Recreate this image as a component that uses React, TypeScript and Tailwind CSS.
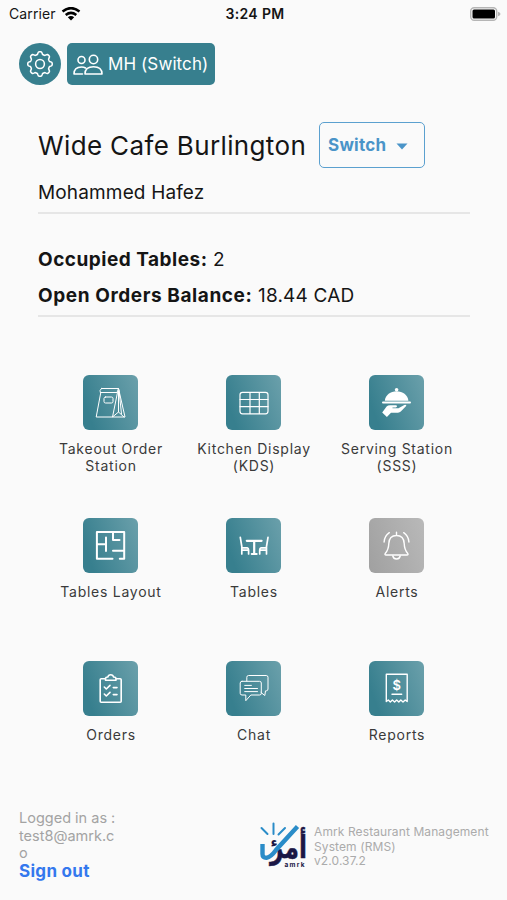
import type { ReactNode } from "react";

const tiles: { title: string; off?: boolean; icon: ReactNode }[] = [
  {
    title: "Takeout Order Station",
    icon: (
      <g strokeWidth="1">
        <path d="M18.5 13.5H35.5L34 17.5H17.3q-1.2-2 1.2-4Z" />
        <path d="M17.8 17.5L13.2 42H29.5L34.5 17.5M35.5 13.5L42 42H29.5L35.5 37L41 42M35.5 16V37M36 15L38.5 39" />
        <rect x="21" y="22" width="9" height="6" rx="1.5" />
      </g>
    ),
  },
  {
    title: "Kitchen Display (KDS)",
    icon: (
      <g strokeWidth="1.2">
        <rect x="14" y="17.3" width="28" height="21.5" rx="2.5" />
        <path d="M24 17.5V38.5M33.3 17.5V38.5M14 24.5H42M14 31.7H42" />
      </g>
    ),
  },
  {
    title: "Serving Station (SSS)",
    icon: (
      <g fill="white" stroke="none">
        <circle cx="27.6" cy="14.8" r="1.8" />
        <path d="M15.8 25.7C16.5 20 21.5 16.3 27.6 16.3S38.7 20 39.4 25.7Z" />
        <rect x="13" y="26.6" width="29" height="2" rx="1" />
        <path d="M13.2 37.4L17.6 31.6Q18.8 30.2 21 30.2H26.8Q28 30.2 28 31.3T26.8 32.5H23.5V33.3H29.5L35.3 30Q37 29.5 37.4 30.8L31.8 36.6Q30.7 37.7 29 37.7H22L17.9 42Z" />
      </g>
    ),
  },
  {
    title: "Tables Layout",
    icon: (
      <path
        strokeWidth="2"
        d="M29.5 40.7H13.9V13.9H41.2V40.7H36.8M30 14V22H36.5M23 19.5V33M14 26.3H23M30 32.7H41"
      />
    ),
  },
  {
    title: "Tables",
    icon: (
      <g strokeWidth="1.7">
        <path d="M14.3 19.3L15.8 28.5V36M15.8 29.8H21.3Q22.6 30 22.6 32V36M16 32.2H22" />
        <path d="M42 19.3L40.5 28.5V36M40.5 29.8H35Q33.7 30 33.7 32V36M40.3 32.2H34.3" />
        <path strokeWidth="2.2" d="M20.8 22.8H35.6M28.2 23V36M25.8 36H30.6" />
      </g>
    ),
  },
  {
    title: "Alerts",
    off: true,
    icon: (
      <g strokeWidth="1.4">
        <path d="M27.5 14.2V17.5M27.5 17.5C22 17.5 20 21.5 19.8 25.5C19.6 31 18.5 33 16.2 35.5Q15.5 37 17 37H38Q39.5 37 38.8 35.5C36.5 33 35.4 31 35.2 25.5C35 21.5 33 17.5 27.5 17.5Z" />
        <path d="M23.8 38Q24.5 41 27.5 41T31.2 38M20.3 14.7Q15.5 18 15.1 24M34.7 14.7Q39.5 18 39.9 24" />
      </g>
    ),
  },
  {
    title: "Orders",
    icon: (
      <g strokeWidth="1.6">
        <path d="M22.5 17.7H18.2Q17.2 17.7 17.2 18.7V40.2Q17.2 41.2 18.2 41.2H37.2Q38.2 41.2 38.2 40.2V18.7Q38.2 17.7 37.2 17.7H33" />
        <path d="M22.5 19.2V17.2Q22.7 16.1 24.8 16Q25.3 13.7 27.7 13.7T30.6 16Q32.8 16.1 33 17.2V19.2Z" />
        <path d="M21.3 26L23.3 28L27 24.4M30.3 26.6H34M21.3 33L23.3 35L27 31.4M30.3 33.6H34" />
      </g>
    ),
  },
  {
    title: "Chat",
    icon: (
      <g strokeWidth="1">
        <path d="M20.8 20V16.3Q20.8 14.5 22.6 14.5H40.2Q42 14.5 42 16.3V28Q42 29.7 40.2 29.9H39.5L38.8 34.5L35 31.5" />
        <path d="M16 20.3H33.5Q35.3 20.3 35.3 22V32.3Q35.3 34 33.5 34H24.8L19.8 39.7V34H16Q14.2 34 14.2 32.3V22Q14.2 20.3 16 20.3Z" />
        <path d="M18.7 24.4H25.4M18.7 27.5H31.5M18.7 30.6H31.5" />
      </g>
    ),
  },
  {
    title: "Reports",
    icon: (
      <>
        <path
          strokeWidth="1.4"
          d="M17.3 40.5V13.2H38.2V40.5L36.2 39L34 41L31.8 39L29.8 41L27.7 39L25.6 41L23.4 39L21.3 41L19.3 39ZM23 33.2H32.7"
        />
        <text x="27.7" y="29" textAnchor="middle" fontFamily="Inter, sans-serif" fontWeight="600" fontSize="13" fill="white" stroke="none">
          $
        </text>
      </>
    ),
  },
];

// eight rounded teeth around the hub
const gear =
  Array.from({ length: 97 }, (_, i) => {
    const a = (i / 96) * Math.PI * 2;
    const r = 10.7 + 1.3 * Math.tanh(2 * Math.cos(a * 8));
    return `${i ? "L" : "M"}${(20.5 + r * Math.sin(a)).toFixed(2)} ${(20.5 - r * Math.cos(a)).toFixed(2)}`;
  }).join("") + "Z";

function StatusBar() {
  return (
    <header className="grid h-[27px] grid-cols-3 items-center pr-[6px] pl-[9px] text-[14px]">
      <div className="flex items-center gap-[5px] tracking-[0.1px]">
        Carrier
        <svg width="20" height="14" viewBox="0 0 20 14" fill="none" stroke="black" strokeWidth="2.5">
          <path d="M1.5 4.5Q10-2.3 18.5 4.5M4.7 8Q10 3.7 15.3 8" />
          <path d="M10 13.5L6.8 10.2Q10 7.8 13.2 10.2Z" fill="black" stroke="none" />
        </svg>
      </div>
      <div className="text-center font-semibold tracking-[0.35px] whitespace-nowrap">3:24 PM</div>
      <svg className="justify-self-end" width="31" height="14" viewBox="0 0 31 14">
        <rect x="0.7" y="0.7" width="26" height="12.6" rx="3.5" fill="#fafafa" stroke="#b5b5b5" strokeWidth="1.4" />
        <rect x="2.5" y="2.5" width="22.5" height="9" rx="1.5" />
        <path d="M28 4.8Q30.5 5.5 30.5 7T28 9.2Z" fill="#b5b5b5" />
      </svg>
    </header>
  );
}

function Logo() {
  return (
    <svg width="50" height="50" viewBox="0 0 50 50" className="shrink-0 overflow-visible">
      <text
        x="48"
        y="36"
        textAnchor="start"
        direction="rtl"
        fontFamily="'DejaVu Sans', sans-serif"
        fontWeight="700"
        fontSize="31"
        fill="#1b1745"
        stroke="#1b1745"
        strokeWidth="0.5"
        textLength="37"
        lengthAdjust="spacingAndGlyphs"
      >
        أمر
      </text>
      <g fill="none" stroke="#2a8cc8" strokeLinecap="round">
        <path strokeWidth="2" d="M2.5 6L8.5 12M14.5 1.5V12M26 6L19.5 12.5" />
        <path strokeWidth="4.4" strokeLinecap="butt" d="M3.5 22V32Q3.5 36 7.5 35.8Q12 35 17 28L38.5 4.5" />
      </g>
      <text x="11.5" y="25" fontFamily="'DejaVu Sans', sans-serif" fontWeight="700" fontSize="14" fill="#1b1745">
        ء
      </text>
      <text x="25.5" y="45" fontFamily="Inter, sans-serif" fontWeight="700" fontSize="6.5" letterSpacing="1.3" fill="#1b1745">
        amrk
      </text>
    </svg>
  );
}

export default function App() {
  return (
    <div className="flex h-[900px] w-[507px] flex-col bg-[#fafafa] font-['Inter',sans-serif] text-[#151515]">
      <StatusBar />

      <div className="mt-4 flex gap-[6px] pl-[19px]">
        <button className="size-[42px] rounded-full bg-[#377f8e]">
          <svg width="42" height="42" viewBox="0 0 41 41" fill="none" stroke="white" strokeWidth="1.5" strokeLinejoin="round">
            <path d={gear} />
            <circle cx="20.5" cy="20.5" r="4.3" />
          </svg>
        </button>
        <button className="flex h-[42px] w-[148px] items-center gap-[5px] rounded-[5px] bg-[#377f8e] pt-[2px] pl-[6px] text-[17px] tracking-[0.1px] whitespace-nowrap text-white">
          <svg width="30" height="22" viewBox="0 0 30 22" fill="none" stroke="white" strokeWidth="1.6" strokeLinecap="round" strokeLinejoin="round">
            <circle cx="8.5" cy="6" r="3.5" />
            <circle cx="20.5" cy="5.5" r="4.2" />
            <path d="M12 20H29Q29 12.8 20.5 12.8T12 20ZM9.5 20H1Q1 13 8.5 13Q11 13 12.5 14" />
          </svg>
          MH (Switch)
        </button>
      </div>

      <section className="mt-[37px] mr-[37px] ml-[38px]">
        <div className="flex h-[46px] items-center">
          <h1 className="w-[281px] text-[26px] tracking-[0.36px] whitespace-nowrap">Wide Cafe Burlington</h1>
          <button className="flex h-[46px] w-[106px] items-center rounded-[5px] border border-[#5ba0cf] pt-[2px] pl-2 text-[17px] font-bold tracking-[0.25px] text-[#4a94c8]">
            Switch
            <svg className="ml-[10px]" width="12" height="7" viewBox="0 0 12 7" fill="currentColor">
              <path d="M0.5 0.5H11.5L6 6.5Z" />
            </svg>
          </button>
        </div>
        <p className="flex h-[46px] items-center border-b-2 border-[#e6e6e6] pt-[6px] text-[19px] tracking-[0.15px]">Mohammed Hafez</p>
        <div className="mt-[28px] border-b-2 border-[#e6e6e6] pb-px text-[19px] leading-9 tracking-[0.2px]">
          <p>
            <b className="font-bold tracking-[0.5px]">Occupied Tables:</b> 2
          </p>
          <p>
            <b className="font-bold tracking-[0.58px]">Open Orders Balance:</b> 18.44 CAD
          </p>
        </div>
      </section>

      <section className="mt-[58px] ml-[39px] grid w-[429px] auto-rows-[143px] grid-cols-3">
        {tiles.map((t) => (
          <div key={t.title} className="flex flex-col items-center">
            <div
              className={
                "size-[55px] rounded-[6px] " +
                (t.off
                  ? "bg-[linear-gradient(70deg,#a0a0a0,#b9b9b9)]"
                  : "bg-[linear-gradient(70deg,#377f8e_15%,#6ba0ab)]")
              }
            >
              <svg width="55" height="55" viewBox="0 0 55 55" fill="none" stroke="white" strokeLinecap="round" strokeLinejoin="round">
                {t.icon}
              </svg>
            </div>
            <div className="mt-[10px] w-[120px] pl-px text-center text-[14px] leading-[17px] tracking-[0.74px] text-[#3a3a3a]">
              {t.title}
            </div>
          </div>
        ))}
      </section>

      <footer className="mt-[5px] flex justify-between pr-[13px] pl-[19px]">
        <div className="text-[14.5px] leading-[17.5px] text-[#a3a3a3]">
          <p className="w-[100px] break-all">
            Logged in as :<br />
            test8@amrk.co
          </p>
          <a className="mt-px block text-[17px] font-bold tracking-[0.3px] text-[#3478ee]">Sign out</a>
        </div>
        <div className="mt-[13px] flex gap-[5px]">
          <Logo />
          <p className="mt-[3px] w-[180px] text-[12px] leading-[14.5px] tracking-[0.1px] text-[#ababab]">
            Amrk Restaurant Management System (RMS)
            <br />
            v2.0.37.2
          </p>
        </div>
      </footer>
    </div>
  );
}
